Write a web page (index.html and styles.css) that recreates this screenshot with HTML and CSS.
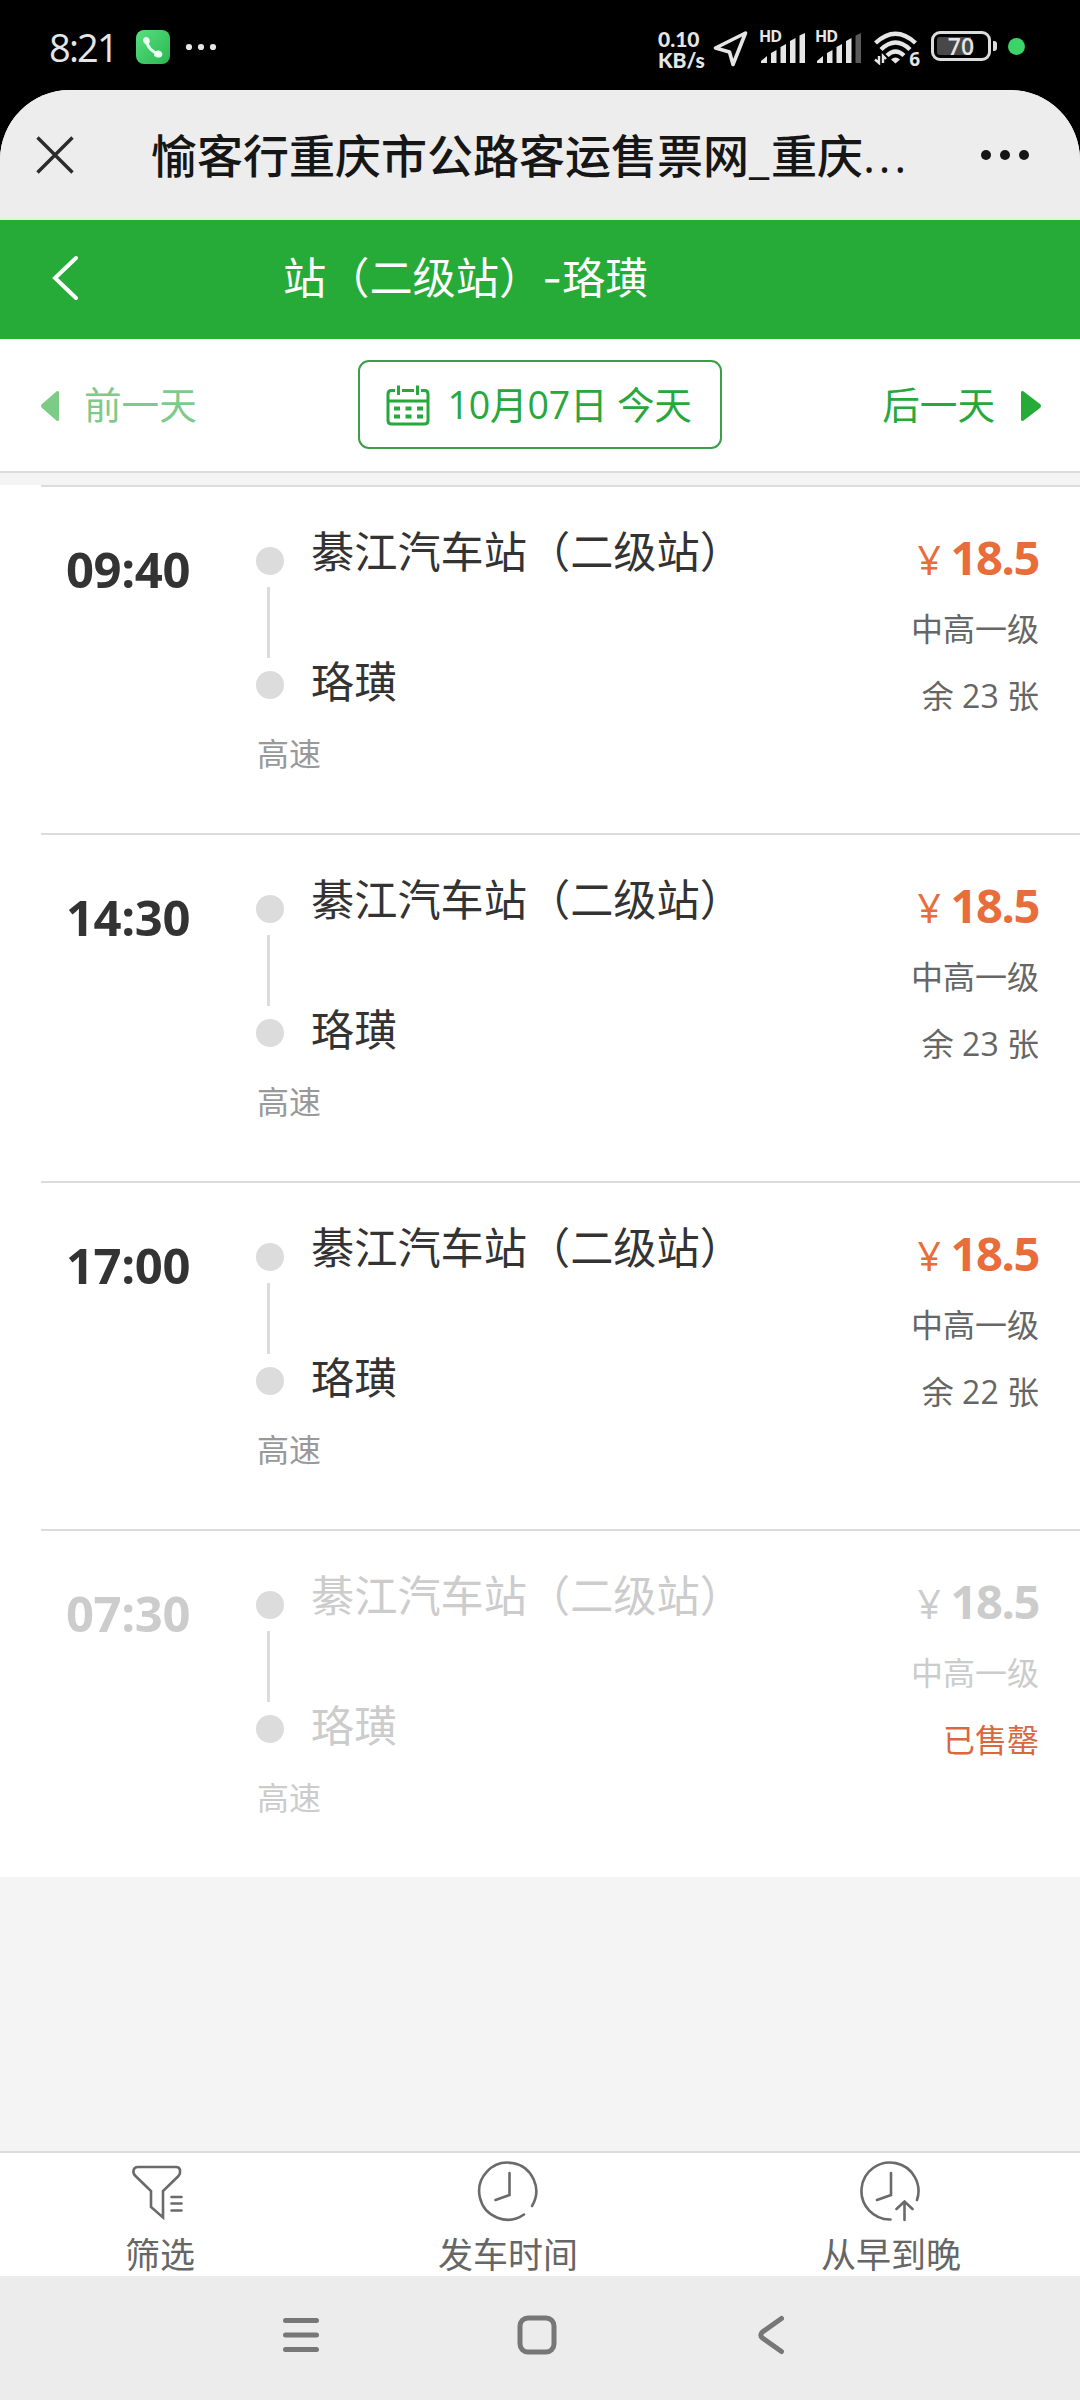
FILE: index.html
```html
<!DOCTYPE html>
<html lang="zh-CN">
<head>
  <meta charset="UTF-8">
  <meta name="viewport" content="width=device-width, initial-scale=1.0">
  <title>愉客行重庆市公路客运售票网</title>
  <link rel="stylesheet" href="styles.css">
</head>
<body>
  <div class="status">
    <span class="clock">8:21</span>
    <svg class="phone" width="34" height="34" viewBox="0 0 34 34">
      <defs>
        <linearGradient id="g" x1="0" y1="0" x2="1" y2="1">
          <stop offset="0" stop-color="#57e07e"/>
          <stop offset="1" stop-color="#2cb653"/>
        </linearGradient>
      </defs>
      <rect width="34" height="34" rx="8" fill="url(#g)"/>
      <path d="M10.500 9.500Q11 20 23.500 24.500" fill="none" stroke="#e9fff0" stroke-width="3"/>
      <path d="M7 10.500c-.5-3.500 5-5 6.500-1 1 3-.5 4.500-3 5.500-1.500-1-3-2.500-3.500-4.500zM18.500 23c1.500-2.500 3.500-3 5.500-2 3.500 1.500 3 6-.5 6.500-2 .3-4-.5-5.500-1.500z" fill="#e9fff0"/>
    </svg>
    <svg class="more" width="32" height="8" viewBox="0 0 32 8" fill="#e6e6e6">
      <circle cx="4" cy="4" r="3.100"/><circle cx="16" cy="4" r="3.100"/><circle cx="28" cy="4" r="3.100"/>
    </svg>
    <div class="speed"><span>0.10</span><span>KB/s</span></div>
    <svg class="arrow" width="36" height="38" viewBox="0 0 36 38">
      <path d="M32.500 3L2.500 18l14 4 3.500 12.500z" fill="none" stroke="#e6e6e6" stroke-width="3.600" stroke-linejoin="round"/>
    </svg>
    <div class="signal">
      <span>HD</span>
      <svg width="46" height="32" viewBox="0 0 46 32" fill="#e6e6e6">
        <path d="M0 31v-2l6-5v7zM10 31V21l5.500-3v13zM19.500 31V15l5.500-3v19zM29 31V9l5.500-3v25zM38.500 31V3.500L44 1v30z"/>
      </svg>
    </div>
    <div class="signal">
      <span>HD</span>
      <svg width="46" height="32" viewBox="0 0 46 32" fill="#e6e6e6">
        <path d="M0 31v-2l6-5v7zM10 31V21l5.500-3v13zM19.500 31V15l5.500-3v19zM29 31V9l5.500-3v25z"/>
        <path fill="#5a5a5a" d="M38.500 31V3.500L44 1v30z"/>
      </svg>
    </div>
    <div class="wifi">
      <svg width="44" height="34" viewBox="0 0 44 34" fill="none" stroke="#e6e6e6" stroke-width="4.400">
        <path d="M1.500 12q20-18.500 40 0M7 18.500q14.500-14 29 0M13 24.500q8.500-8 17 0"/>
        <path d="M17 28.500q4.500-4 9 0l-4.500 4z" fill="#e6e6e6" stroke="none"/>
        <path d="M5 25v7l-4-3.500M9 32v-7l3 3" stroke-width="2.400"/>
      </svg>
      <span>6</span>
    </div>
    <div class="battery"><span>70</span></div>
    <i class="nub"></i>
    <i class="dot"></i>
  </div>

  <div class="app">
    <div class="titlebar">
      <svg width="38" height="38" viewBox="0 0 38 38"><path d="M1.500 1.500l35 35M36.500 1.500l-35 35" stroke="#2b2b2b" stroke-width="3.400"/></svg>
      <h1>愉客行重庆市公路客运售票网<span>_</span>重庆<b>...</b></h1>
      <svg class="menu" width="50" height="12" viewBox="0 0 50 12" fill="#161616">
        <circle cx="6" cy="6" r="5"/><circle cx="25" cy="6" r="5"/><circle cx="44" cy="6" r="5"/>
      </svg>
    </div>

    <header>
      <svg width="28" height="46" viewBox="0 0 28 46"><path d="M25 3L4 23l21 20" fill="none" stroke="#fff" stroke-width="4" stroke-linecap="round" stroke-linejoin="miter"/></svg>
      <h2>站（二级站）<span>-</span>珞璜</h2>
    </header>

    <div class="days">
      <a class="prev">
        <svg width="18" height="30" viewBox="0 0 18 30"><path d="M18 1v28q0 1-2 1L1 17q-2-2 0-4L16 0q2 0 2 1z"/></svg>
        前一天
      </a>
      <a class="date">
        <svg width="44" height="42" viewBox="0 0 44 42" fill="none" stroke="#27a83c" stroke-width="3">
          <path d="M9 6.500H5.500Q2 6.500 2 10v26.500Q2 40 5.500 40h33q3.500 0 3.500-3.500V10q0-3.500-3.500-3.500H35M16 6.500h12M2 17h40M12.500 1.500v9.500M31.500 1.500v9.500"/>
          <path d="M8 24.500h6M19.500 24.500h6M31 24.500h6M8 32.500h6M19.500 32.500h6M31 32.500h6" stroke-width="4"/>
        </svg>
        <span>10月07日 今天</span>
      </a>
      <a class="next">
        后一天
        <svg width="20" height="30" viewBox="0 0 20 30"><path d="M0 1v28q0 1 2 1l17-13q2-2 0-4L2 0Q0 0 0 1z"/></svg>
      </a>
    </div>

    <ul class="list">
      <li>
        <time>09:40</time>
        <div class="line"><i></i><s></s><i></i></div>
        <div class="route">
          <p>綦江汽车站（二级站）</p>
          <p>珞璜</p>
          <small>高速</small>
        </div>
        <div class="info">
          <strong><em>¥</em>18.5</strong>
          <span>中高一级</span>
          <span>余 23 张</span>
        </div>
      </li>
      <li>
        <time>14:30</time>
        <div class="line"><i></i><s></s><i></i></div>
        <div class="route">
          <p>綦江汽车站（二级站）</p>
          <p>珞璜</p>
          <small>高速</small>
        </div>
        <div class="info">
          <strong><em>¥</em>18.5</strong>
          <span>中高一级</span>
          <span>余 23 张</span>
        </div>
      </li>
      <li>
        <time>17:00</time>
        <div class="line"><i></i><s></s><i></i></div>
        <div class="route">
          <p>綦江汽车站（二级站）</p>
          <p>珞璜</p>
          <small>高速</small>
        </div>
        <div class="info">
          <strong><em>¥</em>18.5</strong>
          <span>中高一级</span>
          <span>余 22 张</span>
        </div>
      </li>
      <li class="soldout">
        <time>07:30</time>
        <div class="line"><i></i><s></s><i></i></div>
        <div class="route">
          <p>綦江汽车站（二级站）</p>
          <p>珞璜</p>
          <small>高速</small>
        </div>
        <div class="info">
          <strong><em>¥</em>18.5</strong>
          <span>中高一级</span>
          <span class="none">已售罄</span>
        </div>
      </li>
    </ul>

    <footer>
      <a>
        <svg width="62" height="62" viewBox="0 0 62 62">
          <path d="M9 7h38c5 0 5 6 2.500 9L34 31v26.500L22 47V31L6.500 16C3 12.500 4 7 9 7z"/>
          <path d="M42.500 37h10M42.500 43.500h10M42.500 50.500h10"/>
        </svg>
        筛选
      </a>
      <a>
        <svg width="62" height="62" viewBox="0 0 62 62">
          <path d="M55 46A28.500 28.500 0 1 0 47 54.500M32.500 13v22L18.500 40"/>
        </svg>
        发车时间
      </a>
      <a>
        <svg width="62" height="62" viewBox="0 0 62 62">
          <path d="M57 40A28.500 28.500 0 1 0 30.500 59.500M31 13v22L17 40M44.500 60V42M36.500 49l8-7.500 8 7.500"/>
        </svg>
        从早到晚
      </a>
    </footer>
  </div>

  <nav>
    <svg width="38" height="40" viewBox="0 0 38 40"><path d="M3.500 5.500h31M3.500 20h31M3.500 34.500h31"/></svg>
    <svg width="40" height="40" viewBox="0 0 40 40"><rect x="3" y="3" width="34" height="34" rx="8"/></svg>
    <svg width="28" height="40" viewBox="0 0 28 40"><path d="M24.500 3.500L5.500 17q-3.500 3 0 6l19 13.500"/></svg>
  </nav>
</body>
</html>
```

FILE: styles.css
```css
* { box-sizing: border-box; }

body {
  margin: 0;
  width: 1080px;
  height: 2400px;
  display: flex;
  flex-direction: column;
  background: #000;
  font-family: "Open Sans", "Noto Sans CJK SC", sans-serif;
  overflow: hidden;
}

h1, h2, p, ul {
  margin: 0;
  padding: 0;
  font-weight: normal;
  white-space: nowrap;
}

svg { display: block; flex: none; }


/* Status bar */

.status {
  height: 90px;
  display: flex;
  align-items: center;
  padding: 4px 0 0 49px;
  color: #e6e6e6;
}

.clock {
  width: 87px;
  font-size: 38px;
  font-weight: 500;
  line-height: 44px;
  letter-spacing: -1.8px;
}

.more { margin-left: 15px; }

.speed {
  margin: 3px 0 0 441px;
  width: 55px;
  font-family: Lato, sans-serif;
  font-size: 21px;
  font-weight: 900;
  line-height: 21px;
}

.speed span { display: block; }

.arrow { margin-top: 4px; }

.signal {
  position: relative;
  margin: 2px 0 0 11px;
  padding-left: 1px;
}

.signal + .signal { margin-left: 9px; }

.signal span {
  position: absolute;
  left: -1px;
  top: -3px;
  font-size: 16px;
  font-weight: bold;
  line-height: 14px;
  letter-spacing: -1px;
}

.wifi {
  position: relative;
  margin: 1px 0 0 11px;
}

.wifi span {
  position: absolute;
  right: -2px;
  bottom: -3px;
  font-size: 19px;
  font-weight: bold;
  line-height: 17px;
}

.battery {
  width: 60px;
  height: 30px;
  margin: -2px 0 0 13px;
  border: 3px solid #dcdcdc;
  border-radius: 9px;
  padding: 3px;
}

.battery span {
  display: block;
  font-size: 23px;
  font-weight: 600;
  line-height: 18px;
  text-align: center;
  border-radius: 3px;
  background: linear-gradient(90deg, #484848 70%, #000 70%);
}

.nub {
  width: 4px;
  height: 10px;
  margin: -2px 0 0 2px;
  border-radius: 0 3px 3px 0;
  background: #dcdcdc;
}

.dot {
  width: 17px;
  height: 17px;
  margin: -1px 0 0 11px;
  border-radius: 50%;
  background: #3bd468;
}


/* Page */

.app {
  height: 2186px;
  display: flex;
  flex-direction: column;
  background: #f4f4f4;
  border-radius: 70px 70px 0 0;
  overflow: hidden;
}

.titlebar {
  height: 130px;
  display: flex;
  align-items: center;
  padding: 1px 50px 0 36px;
  background: #ededed;
  border-bottom: 2px solid #dcf6de;
}

h1 {
  margin-left: 77px;
  width: 760px;
  color: #161616;
  font-size: 46px;
  font-weight: 500;
  line-height: 60px;
}

h1 span { display: inline-block; width: 22px; }

h1 b { font-weight: 500; letter-spacing: 3.500px; }

.menu { margin-left: auto; }

header {
  height: 119px;
  display: flex;
  align-items: center;
  padding: 0 0 3px 51px;
  background: #26ab38;
}

h2 {
  margin-left: 204px;
  color: #fff;
  font-size: 43.2px;
  line-height: 60px;
}

h2 span {
  display: inline-block;
  width: 20px;
  font-family: Inter;
}

.days {
  height: 134px;
  display: flex;
  align-items: center;
  justify-content: space-between;
  padding: 0 39px 1px 41px;
  background: #fff;
  border-bottom: 2px solid #dcdcdc;
  color: #27a83c;
  font-size: 37.6px;
  line-height: 50px;
}

.days a {
  display: flex;
  align-items: center;
}

.prev { gap: 25px; }

.next { gap: 26px; }

.prev svg, .next svg { fill: #26ab38; margin-top: 2px; }

.prev { opacity: 0.6; }

.date {
  width: 364px;
  height: 89px;
  padding-left: 26px;
  gap: 18px;
  border: 2px solid #3a9e4b;
  border-radius: 11px;
}

.date span { white-space: nowrap; letter-spacing: -0.2px; }


/* Departures */

.list {
  margin-top: 12px;
  list-style: none;
  background: #fff;
}

li {
  height: 348px;
  margin-left: 41px;
  display: flex;
  border-top: 2px solid #dcdcdc;
  color: #333;
}

time {
  width: 174px;
  text-align: center;
  padding-top: 52px;
  font-size: 49px;
  font-weight: bold;
  line-height: 60px;
  letter-spacing: -0.4px;
}

.line {
  width: 28px;
  margin-left: 41px;
  padding-top: 60px;
}

.line i {
  display: block;
  width: 28px;
  height: 28px;
  border-radius: 50%;
  background: #dcdcdc;
}

.line s {
  display: block;
  width: 3px;
  height: 71px;
  margin: 12px 0 13px 11px;
  background: #dcdcdc;
}

.route { margin-left: 27px; }

.route p {
  padding-top: 35px;
  font-size: 43.2px;
  line-height: 60px;
}

.route p + p { padding-top: 70px; }

.route small {
  display: block;
  margin: 22px 0 0 -54px;
  color: #999;
  font-size: 32px;
  line-height: 40px;
}

.info {
  margin: 40px 41px 0 auto;
  display: flex;
  flex-direction: column;
  align-items: flex-end;
  color: #666;
  font-size: 32px;
}

.info strong {
  color: #e96c3b;
  font-size: 47px;
  line-height: 60px;
  letter-spacing: -1.4px;
}

.info em {
  margin-right: 11px;
  font-style: normal;
  font-weight: normal;
  font-size: 41px;
}

.info span {
  margin-top: 20px;
  line-height: 40px;
}

.info span + span { margin-top: 27px; }

.soldout,
.soldout small,
.soldout .info,
.soldout strong { color: #ccc; }

.soldout .none { color: #d9683f; }


/* Bottom bar */

footer {
  height: 125px;
  margin-top: auto;
  display: flex;
  gap: 243px;
  padding-left: 125px;
  background: #fff;
  border-top: 2px solid #dcdcdc;
  color: #666;
  font-size: 35px;
  line-height: 40px;
}

footer a {
  display: flex;
  flex-direction: column;
  align-items: center;
  padding-top: 7px;
  gap: 13px;
}

footer svg {
  fill: none;
  stroke: #6a6a6a;
  stroke-width: 2.6;
  stroke-linecap: round;
}

nav {
  height: 124px;
  display: flex;
  padding: 39px 0 0 282px;
  background: #ececec;
}

nav svg {
  fill: none;
  stroke: #777;
  stroke-width: 5;
  stroke-linecap: round;
}

nav svg + svg { margin-left: 197px; }

nav svg:last-child { margin-left: 200px; }
```
